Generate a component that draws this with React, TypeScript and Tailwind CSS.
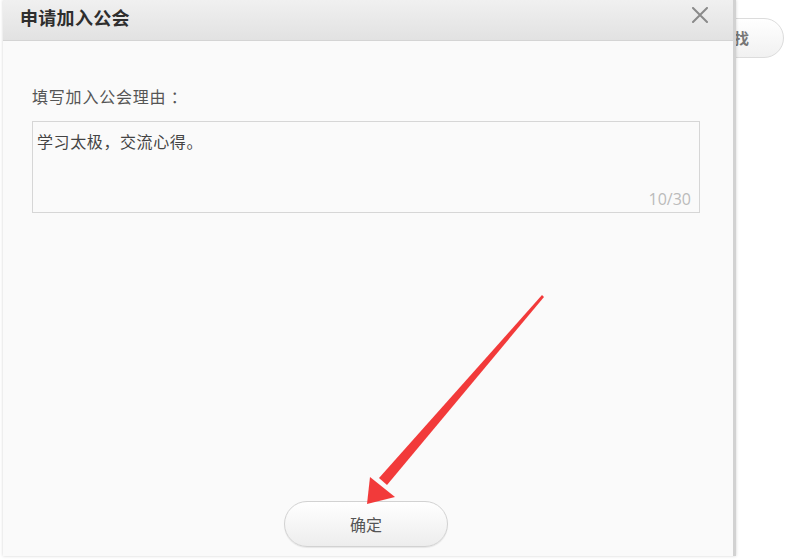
import React from 'react'

const cjk = { fontFamily: '"Microsoft YaHei", "Noto Sans CJK SC", "Liberation Sans", sans-serif' }

function CloseIcon() {
  return (
    <svg width="18" height="16" viewBox="0 0 18 16" className="block">
      <path d="M2 1 L16 15 M16 1 L2 15" stroke="#8a8a8a" strokeWidth="2" strokeLinecap="round" fill="none" />
    </svg>
  )
}

function Arrow() {
  // red tapering pointer toward the confirm button
  return (
    <svg
      width="785"
      height="559"
      viewBox="0 0 785 559"
      className="pointer-events-none absolute left-0 top-0"
    >
      <path d="M542 295 L544 297 L387 485 L379 478 Z" fill="#f23a3a" />
      <path d="M367 504 L370 477 L395 497 Z" fill="#f23a3a" />
    </svg>
  )
}

export default function App() {
  return (
    <div className="relative h-[559px] w-[785px] overflow-hidden bg-white" style={cjk}>
      {/* page behind the dialog */}
      <div className="absolute left-[690px] top-[18px] flex h-[40px] w-[94px] items-center justify-end rounded-r-[20px] border border-[#dcdcdc] bg-gradient-to-b from-white to-[#f1f1f1] pr-[34px] text-[15px] font-bold text-[#777]">
        查找
      </div>

      {/* dialog */}
      <div className="absolute left-[3px] top-0 flex h-[556px] w-[733px] flex-col border-r-[3px] border-[#d2d2d2] bg-[#fafafa] shadow-[0_0_3px_rgba(0,0,0,0.18)]">
        <div className="flex h-[41px] flex-shrink-0 items-center justify-between border-b border-[#d4d4d4] bg-gradient-to-b from-[#f0f0f0] to-[#e2e2e2] pl-[17px] pr-[24px]">
          <h1 className="pb-[6px] text-[18px] font-bold tracking-[0.3px] text-[#2e2e2e]">申请加入公会</h1>
          <button className="mb-[10px]">
            <CloseIcon />
          </button>
        </div>

        <div className="flex flex-1 flex-col px-[29px] pt-[44px]">
          <p className="text-[16px] leading-[22px] tracking-[0.8px] text-[#555]">填写加入公会理由 ：</p>

          <div className="relative mt-[14px] h-[92px] w-[668px] border border-[#d6d6d6] bg-[#fafafa]">
            <p className="pl-[4px] pt-[8px] text-[16px] leading-[22px] tracking-[0.6px] text-[#444]">学习太极，交流心得。</p>
            <span className="absolute bottom-[1px] right-[8px] text-[16px] text-[#bbb]" style={{ fontFamily: '"Open Sans", "Liberation Sans", sans-serif' }}>
              10/30
            </span>
          </div>

          <div className="mt-auto mb-[9px] flex justify-center pr-[4px]">
            <button className="h-[46px] w-[164px] rounded-full border border-[#d2d2d2] bg-gradient-to-b from-white to-[#ededed] text-[16px] text-[#555] shadow-[0_1px_1px_rgba(0,0,0,0.08)]">
              确定
            </button>
          </div>
        </div>
      </div>

      <Arrow />
    </div>
  )
}
